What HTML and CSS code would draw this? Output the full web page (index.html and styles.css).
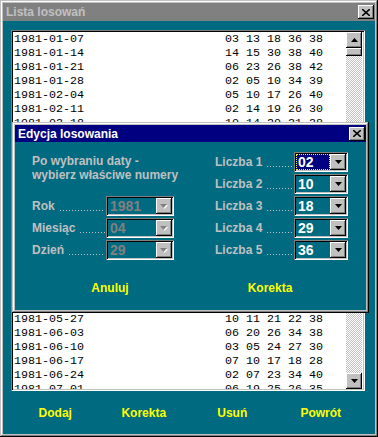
FILE: index.html
```html
<!DOCTYPE html>
<html lang="pl">
<head>
  <meta charset="UTF-8">
  <title>Lista losowań</title>
  <link rel="stylesheet" href="styles.css">
</head>
<body>
  <div class="window">
    <div class="titlebar">
      <span class="title">Lista losowań</span>
      <span class="close"><svg width="8" height="7" viewBox="0 0 8 7"><path d="M0 0L8 7M8 0L0 7" stroke="#000" stroke-width="1.6"/></svg></span>
    </div>

    <div class="client">
      <div class="listbox">
        <div class="rows">
          <div class="row"><span class="date">1981-01-07</span><span class="nums">03 13 18 36 38</span></div>
          <div class="row"><span class="date">1981-01-14</span><span class="nums">14 15 30 38 40</span></div>
          <div class="row"><span class="date">1981-01-21</span><span class="nums">06 23 26 38 42</span></div>
          <div class="row"><span class="date">1981-01-28</span><span class="nums">02 05 10 34 39</span></div>
          <div class="row"><span class="date">1981-02-04</span><span class="nums">05 10 17 26 40</span></div>
          <div class="row"><span class="date">1981-02-11</span><span class="nums">02 14 19 26 30</span></div>
          <div class="row"><span class="date">1981-02-18</span><span class="nums">10 14 20 21 28</span></div>
          <div class="row"><span class="date">1981-02-25</span><span class="nums">04 09 22 31 37</span></div>
          <div class="row"><span class="date">1981-03-04</span><span class="nums">01 11 16 29 41</span></div>
          <div class="row"><span class="date">1981-03-11</span><span class="nums">07 12 24 33 39</span></div>
          <div class="row"><span class="date">1981-03-18</span><span class="nums">03 08 19 27 35</span></div>
          <div class="row"><span class="date">1981-03-25</span><span class="nums">05 13 21 30 44</span></div>
          <div class="row"><span class="date">1981-04-01</span><span class="nums">02 17 23 32 40</span></div>
          <div class="row"><span class="date">1981-04-08</span><span class="nums">09 15 28 36 42</span></div>
          <div class="row"><span class="date">1981-04-15</span><span class="nums">06 11 18 25 33</span></div>
          <div class="row"><span class="date">1981-04-22</span><span class="nums">04 16 20 34 39</span></div>
          <div class="row"><span class="date">1981-04-29</span><span class="nums">02 10 18 29 36</span></div>
          <div class="row"><span class="date">1981-05-06</span><span class="nums">08 14 22 27 41</span></div>
          <div class="row"><span class="date">1981-05-13</span><span class="nums">01 12 19 31 38</span></div>
          <div class="row"><span class="date">1981-05-20</span><span class="nums">03 07 24 35 43</span></div>
          <div class="row"><span class="date">1981-05-27</span><span class="nums">10 11 21 22 38</span></div>
          <div class="row"><span class="date">1981-06-03</span><span class="nums">06 20 26 34 38</span></div>
          <div class="row"><span class="date">1981-06-10</span><span class="nums">03 05 24 27 30</span></div>
          <div class="row"><span class="date">1981-06-17</span><span class="nums">07 10 17 18 28</span></div>
          <div class="row"><span class="date">1981-06-24</span><span class="nums">02 07 23 34 40</span></div>
          <div class="row"><span class="date">1981-07-01</span><span class="nums">06 19 25 26 35</span></div>
        </div>
        <div class="scrollbar">
          <span class="sb-btn"><svg width="7" height="4" viewBox="0 0 7 4"><path d="M3.5 0L7 4H0z" fill="#000"/></svg></span>
          <span class="thumb"></span>
          <span class="track"></span>
          <span class="sb-btn"><svg width="7" height="4" viewBox="0 0 7 4"><path d="M0 0H7L3.5 4z" fill="#000"/></svg></span>
        </div>
      </div>

      <div class="actions">
        <span>Dodaj</span>
        <span>Korekta</span>
        <span>Usuń</span>
        <span>Powrót</span>
      </div>
    </div>

    <div class="dialog">
      <div class="titlebar">
        <span class="title">Edycja losowania</span>
        <span class="close"><svg width="8" height="7" viewBox="0 0 8 7"><path d="M0 0L8 7M8 0L0 7" stroke="#000" stroke-width="1.6"/></svg></span>
      </div>
      <div class="dlg-body">
        <div class="form">
          <div class="note">Po wybraniu daty -<br>wybierz właściwe numery</div>

          <div class="field"><span>Liczba 1</span><span class="leader"></span>
            <span class="combo small sel"><span class="value">02</span><span class="drop"><svg width="7" height="4" viewBox="0 0 7 4"><path d="M0 0H7L3.5 4z" fill="#000"/></svg></span></span></div>
          <div class="field"><span>Liczba 2</span><span class="leader"></span>
            <span class="combo small"><span class="value">10</span><span class="drop"><svg width="7" height="4" viewBox="0 0 7 4"><path d="M0 0H7L3.5 4z" fill="#000"/></svg></span></span></div>

          <div class="field"><span>Rok</span><span class="leader"></span>
            <span class="combo wide off"><span class="value">1981</span><span class="drop"><svg width="8" height="5" viewBox="0 0 8 5"><path d="M1 1H8L4.5 5z" fill="#fff"/><path d="M0 0H7L3.5 4z" fill="#808080"/></svg></span></span></div>
          <div class="field"><span>Liczba 3</span><span class="leader"></span>
            <span class="combo small"><span class="value">18</span><span class="drop"><svg width="7" height="4" viewBox="0 0 7 4"><path d="M0 0H7L3.5 4z" fill="#000"/></svg></span></span></div>

          <div class="field"><span>Miesiąc</span><span class="leader"></span>
            <span class="combo wide off"><span class="value">04</span><span class="drop"><svg width="8" height="5" viewBox="0 0 8 5"><path d="M1 1H8L4.5 5z" fill="#fff"/><path d="M0 0H7L3.5 4z" fill="#808080"/></svg></span></span></div>
          <div class="field"><span>Liczba 4</span><span class="leader"></span>
            <span class="combo small"><span class="value">29</span><span class="drop"><svg width="7" height="4" viewBox="0 0 7 4"><path d="M0 0H7L3.5 4z" fill="#000"/></svg></span></span></div>

          <div class="field"><span>Dzień</span><span class="leader"></span>
            <span class="combo wide off"><span class="value">29</span><span class="drop"><svg width="8" height="5" viewBox="0 0 8 5"><path d="M1 1H8L4.5 5z" fill="#fff"/><path d="M0 0H7L3.5 4z" fill="#808080"/></svg></span></span></div>
          <div class="field"><span>Liczba 5</span><span class="leader"></span>
            <span class="combo small"><span class="value">36</span><span class="drop"><svg width="7" height="4" viewBox="0 0 7 4"><path d="M0 0H7L3.5 4z" fill="#000"/></svg></span></span></div>
        </div>

        <div class="dlg-actions">
          <span>Anuluj</span>
          <span>Korekta</span>
        </div>
      </div>
    </div>
  </div>
</body>
</html>
```

FILE: styles.css
```css
body {
  margin: 0;
  font-family: "Liberation Sans", Arial, sans-serif;
}
.window {
  position: relative;
  width: 378px;
  height: 437px;
  box-sizing: border-box;
  padding: 3px;
  background: #c0c0c0;
  box-shadow: inset -1px -1px #000, inset 1px 1px #c0c0c0, inset -2px -2px #808080, inset 2px 2px #fff;
  display: flex;
  flex-direction: column;
}
.titlebar {
  height: 18px;
  display: flex;
  align-items: center;
  justify-content: space-between;
  padding: 0 1px 0 3px;
  background: #808080;
  color: #c0c0c0;
}
.title {
  font-weight: bold;
  font-size: 12px;
}
.close {
  width: 16px;
  height: 14px;
  box-sizing: border-box;
  background: #c0c0c0;
  box-shadow: inset -1px -1px #000, inset 1px 1px #fff, inset -2px -2px #808080;
  display: flex;
  align-items: center;
  justify-content: center;
}
.client {
  flex: 1;
  background: #006a80;
  display: flex;
  flex-direction: column;
  padding: 9px 10px 0 8px;
}
.listbox {
  height: 361px;
  box-sizing: border-box;
  padding: 2px;
  background: #fff;
  box-shadow: inset 1px 1px #808080, inset -1px -1px #fff, inset 2px 2px #000, inset -2px -2px #c0c0c0;
  display: flex;
}
.rows {
  flex: 1;
  overflow: hidden;
  padding-left: 1px;
  font-family: "Liberation Mono", "Courier New", monospace;
  font-size: 11.67px;
  line-height: 14px;
  color: #000;
}
.row {
  display: flex;
  white-space: pre;
}
.date {
  width: 211px;
}
.scrollbar {
  width: 16px;
  margin-right: 1px;
  display: flex;
  flex-direction: column;
  background: repeating-conic-gradient(#c0c0c0 0 25%, #fff 0 50%) 0 0 / 2px 2px;
}
.sb-btn, .thumb {
  background: #c0c0c0;
  box-shadow: inset -1px -1px #000, inset 1px 1px #fff, inset -2px -2px #808080;
}
.sb-btn {
  height: 16px;
  display: flex;
  align-items: center;
  justify-content: center;
}
.thumb {
  height: 8px;
}
.track {
  flex: 1;
}
.actions {
  flex: 1;
  display: grid;
  grid-template-columns: repeat(4, 1fr);
  align-items: center;
  justify-items: center;
  color: #ff0;
  font-weight: bold;
  font-size: 12px;
}

.dialog {
  position: absolute;
  left: 12px;
  top: 122px;
  width: 357px;
  height: 191px;
  box-sizing: border-box;
  padding: 3px;
  background: #c0c0c0;
  box-shadow: inset -1px -1px #000, inset 1px 1px #c0c0c0, inset -2px -2px #808080, inset 2px 2px #fff;
  display: flex;
  flex-direction: column;
}
.dialog .titlebar {
  height: 17px;
  background: #000080;
  color: #fff;
}
.dlg-body {
  flex: 1;
  background: #006a80;
  padding: 10px 0 0 17px;
}
.form {
  display: grid;
  grid-template-columns: 142px 133px;
  grid-template-rows: repeat(5, 20px);
  gap: 2px 41px;
  color: #c0c0c0;
  font-weight: bold;
  font-size: 12px;
}
.note {
  grid-row: 1 / 3;
  padding-top: 2px;
  line-height: 14px;
  white-space: nowrap;
}
.field {
  display: flex;
  align-items: center;
}
.leader {
  flex: 1;
  align-self: flex-end;
  height: 1px;
  margin: 0 1px 5px 5px;
  background: linear-gradient(to right, #c0c0c0 1px, transparent 1px) 0 0 / 3px 1px repeat-x;
}
.combo {
  height: 20px;
  box-sizing: border-box;
  padding: 2px;
  display: flex;
  background: #006a80;
  box-shadow: inset 1px 1px #808080, inset -1px -1px #fff, inset 2px 2px #000, inset -2px -2px #c0c0c0;
}
.combo.small {
  width: 54px;
  margin-left: 1px;
}
.combo.wide {
  width: 68px;
}
.value {
  flex: 1;
  padding-left: 2px;
  font-size: 14px;
  line-height: 16px;
  color: #fff;
}
.combo.off .value {
  color: #808080;
}
.combo.sel .value {
  background: #000080;
  outline: 1px dotted #ff0;
  outline-offset: -1px;
}
.drop {
  width: 16px;
  background: #c0c0c0;
  box-shadow: inset -1px -1px #000, inset 1px 1px #fff, inset -2px -2px #808080;
  display: flex;
  align-items: center;
  justify-content: center;
}
.dlg-actions {
  display: grid;
  grid-template-columns: 160px 160px;
  margin: 20px 0 0 -2px;
  text-align: center;
  line-height: 16px;
  color: #ff0;
  font-weight: bold;
  font-size: 12px;
}
```
